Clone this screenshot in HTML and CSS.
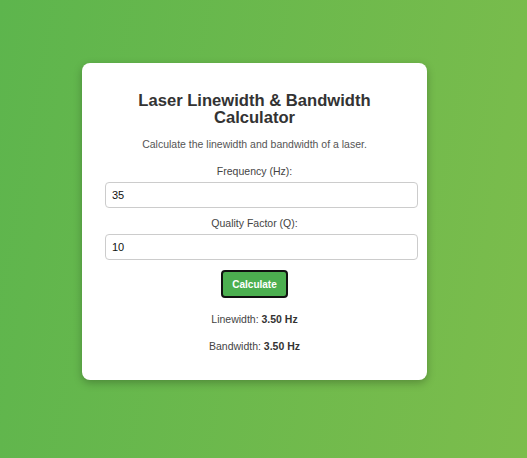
FILE: index.html
```html
<!DOCTYPE html>
<html>
<head>
<meta charset="utf-8">
<link rel="stylesheet" href="styles.css">
</head>
<body>
<div class="page">
  <div class="card">
    <h2 class="title">Laser Linewidth &amp; Bandwidth Calculator</h2>
    <p class="desc">Calculate the linewidth and bandwidth of a laser.</p>
    <label class="label label-first">Frequency (Hz):</label>
    <input class="field" type="text" value="35">
    <label class="label">Quality Factor (Q):</label>
    <input class="field" type="text" value="10">
    <button class="btn">Calculate</button>
    <p class="result">Linewidth: <b>3.50 Hz</b></p>
    <p class="result">Bandwidth: <b>3.50 Hz</b></p>
  </div>
</div>
</body>
</html>
```

FILE: styles.css
```css
html, body {
  margin: 0;
  padding: 0;
  height: 100%;
}
body {
  background: linear-gradient(100deg, #5db54d 0%, #7cbd4c 100%);
  font-family: "Liberation Sans", Arial, sans-serif;
}
.page {
  display: flex;
  justify-content: flex-start;
  align-items: flex-start;
  padding: 63px 0 0 82px;
}
.card {
  box-sizing: border-box;
  width: 345px;
  height: 317px;
  background: #fff;
  border-radius: 8px;
  box-shadow: 0 3px 8px rgba(0, 0, 0, 0.25);
  padding: 29px 20px 20px;
  display: flex;
  flex-direction: column;
  align-items: center;
  text-align: center;
}
.title {
  margin: 0;
  font-size: 16.6px;
  line-height: 17px;
  font-weight: bold;
  color: #333;
}
.desc {
  margin: 11px 0 0;
  font-size: 10.5px;
  line-height: 14px;
  color: #555;
}
.label {
  display: block;
  margin-top: 8px;
  font-size: 10.5px;
  line-height: 14px;
  color: #444;
}
.label-first {
  margin-top: 13px;
}
.field {
  box-sizing: border-box;
  align-self: flex-start;
  width: 313px;
  height: 26px;
  margin: 4px 0 0 3px;
  padding: 4px 6px;
  border: 1px solid #ccc;
  border-radius: 4px;
  font-family: "Liberation Sans", Arial, sans-serif;
  font-size: 11px;
  color: #111;
  outline: none;
}
.btn {
  box-sizing: border-box;
  margin-top: 10px;
  width: 67px;
  height: 28px;
  background: #4caf50;
  color: #fff;
  border: 2px solid #111;
  border-radius: 4px;
  font-family: "Liberation Sans", Arial, sans-serif;
  font-weight: bold;
  font-size: 10px;
  padding: 0;
}
.result {
  margin: 14px 0 0;
  font-size: 10.5px;
  line-height: 14px;
  color: #444;
}
.result + .result {
  margin-top: 13px;
}
.result b {
  color: #333;
}
```
